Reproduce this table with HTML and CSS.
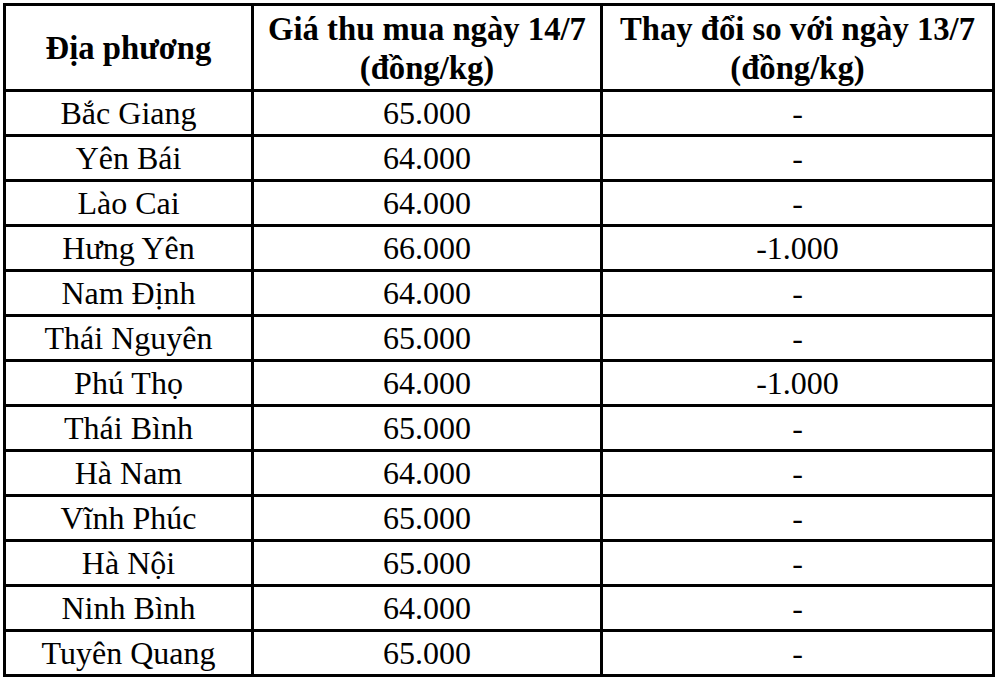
FILE: index.html
```html
<!DOCTYPE html>
<html lang="vi">
<head>
<meta charset="utf-8">
<title>Giá thu mua</title>
<link rel="stylesheet" href="styles.css">
</head>
<body>
<table class="price-table">
  <colgroup>
    <col class="c1">
    <col class="c2">
    <col class="c3">
  </colgroup>
  <thead>
    <tr class="head-row">
      <th class="head-single">Địa phương</th>
      <th>Giá thu mua ngày 14/7<br>(đồng/kg)</th>
      <th>Thay đổi so với ngày 13/7<br>(đồng/kg)</th>
    </tr>
  </thead>
  <tbody>
    <tr><td>Bắc Giang</td><td>65.000</td><td>-</td></tr>
    <tr><td>Yên Bái</td><td>64.000</td><td>-</td></tr>
    <tr><td>Lào Cai</td><td>64.000</td><td>-</td></tr>
    <tr><td>Hưng Yên</td><td>66.000</td><td>-1.000</td></tr>
    <tr><td>Nam Định</td><td>64.000</td><td>-</td></tr>
    <tr><td>Thái Nguyên</td><td>65.000</td><td>-</td></tr>
    <tr><td>Phú Thọ</td><td>64.000</td><td>-1.000</td></tr>
    <tr><td>Thái Bình</td><td>65.000</td><td>-</td></tr>
    <tr><td>Hà Nam</td><td>64.000</td><td>-</td></tr>
    <tr><td>Vĩnh Phúc</td><td>65.000</td><td>-</td></tr>
    <tr><td>Hà Nội</td><td>65.000</td><td>-</td></tr>
    <tr><td>Ninh Bình</td><td>64.000</td><td>-</td></tr>
    <tr><td>Tuyên Quang</td><td>65.000</td><td>-</td></tr>
  </tbody>
</table>
</body>
</html>
```

FILE: styles.css
```css
html, body {
  margin: 0;
  padding: 0;
  background: #ffffff;
}

body {
  padding: 3px 0 0 3px;
  font-family: "Liberation Serif", "Times New Roman", serif;
  color: #000000;
}

.price-table {
  table-layout: fixed;
  border-collapse: separate;
  border-spacing: 0;
  width: 992px;
  border-top: 3px solid #000;
  border-left: 3px solid #000;
}

.c1 { width: 248px; }
.c2 { width: 349px; }
.c3 { width: 392px; }

.price-table th,
.price-table td {
  box-sizing: border-box;
  padding: 0;
  border-right: 3px solid #000;
  border-bottom: 3px solid #000;
  text-align: center;
  vertical-align: middle;
  font-size: 32px;
  line-height: 38.5px;
}

.price-table th {
  height: 86px;
  font-weight: bold;
  font-size: 32.7px;
  padding-top: 2px;
}

.head-single {
  padding-top: 6px;
}

.price-table td {
  height: 45px;
  font-weight: normal;
}
```
